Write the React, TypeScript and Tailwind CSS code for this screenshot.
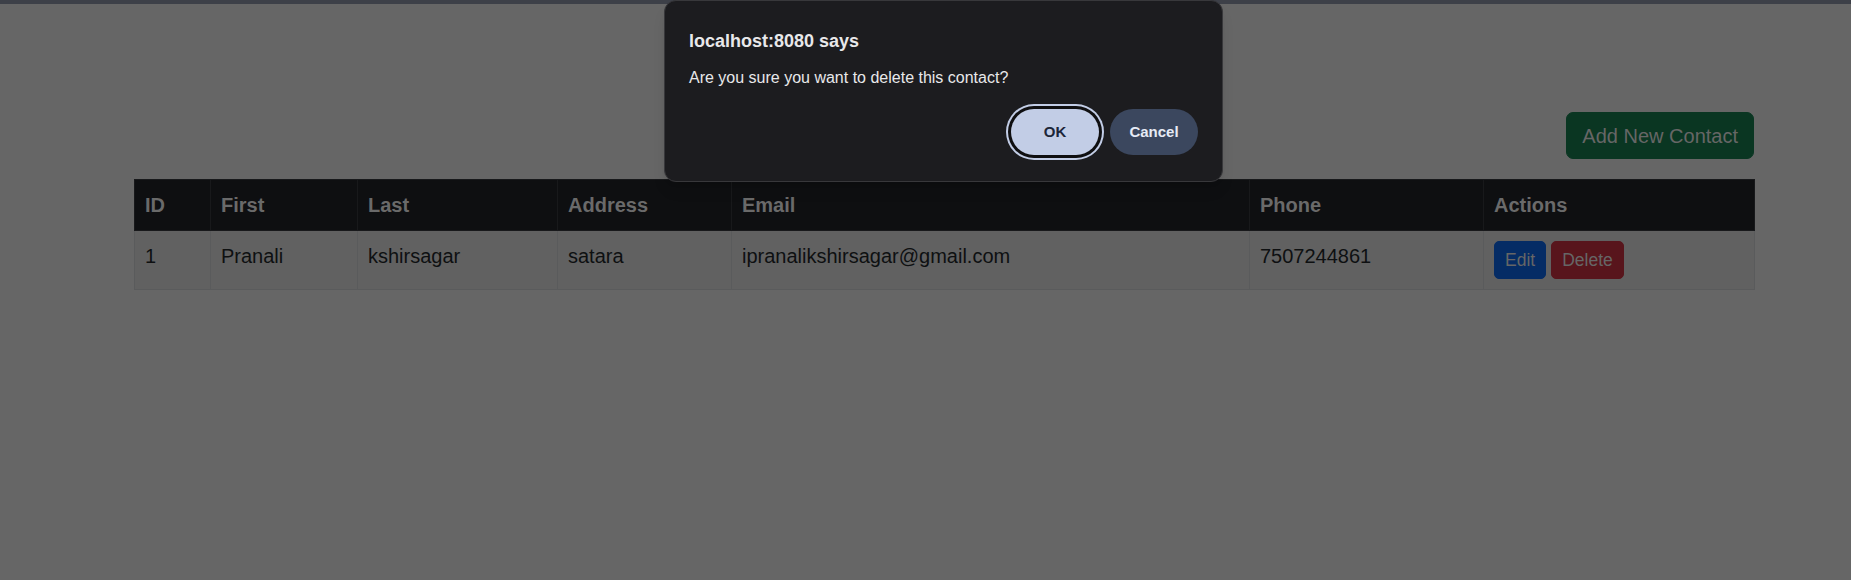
const font = { fontFamily: '"Liberation Sans", Arial, sans-serif' };

const contacts = [
  { id: 1, first: "Pranali", last: "kshirsagar", address: "satara", email: "ipranalikshirsagar@gmail.com", phone: "7507244861" },
];

const colWidths = ["w-[76px]", "w-[147px]", "w-[200px]", "w-[174px]", "w-[518px]", "w-[234px]", "w-[271px]"];
const headers = ["ID", "First", "Last", "Address", "Email", "Phone", "Actions"];

function ConfirmDialog() {
  return (
    <div
      className="absolute left-[664px] top-0 w-[559px] rounded-xl border border-[#38383b] bg-[#1c1c1f] pl-[24px] pr-[24px] pt-[28px] pb-[26px] shadow-lg"
      style={font}
    >
      <h2 className="text-[18px] leading-[24px] font-bold text-[#e8e8ea]">localhost:8080 says</h2>
      <p className="mt-[15px] text-[16px] leading-[20px] text-[#e8e8ea]">Are you sure you want to delete this contact?</p>
      <div className="mt-[21px] flex justify-end gap-[11px]">
        <button className="h-[46px] w-[88px] rounded-full bg-[#c2cde6] text-[15px] font-bold text-[#1c2639] ring-2 ring-[#c2cde6] ring-offset-3 ring-offset-[#0f0f11]">
          OK
        </button>
        <button className="h-[46px] w-[88px] rounded-full bg-[#3b475e] text-[15px] font-bold text-[#e6ebf5]">
          Cancel
        </button>
      </div>
    </div>
  );
}

export default function App() {
  return (
    <div className="relative min-h-[580px] w-full bg-[#666666]" style={font}>
      <div className="h-[4px] bg-[#3d4048]" />
      <div className="ml-[134px] w-[1620px] pt-[108px]">
        <div className="mb-[20px] flex justify-end">
          <button className="h-[47px] rounded-[7px] border border-[#0a3622] bg-[#0a3622] px-[15px] text-[20px] text-[#666666]">
            Add New Contact
          </button>
        </div>
        <table className="w-full table-fixed border-collapse text-[20px] leading-[30px]">
          <colgroup>
            {colWidths.map((w, i) => (
              <col key={i} className={w} />
            ))}
          </colgroup>
          <thead>
            <tr className="bg-[#0e0f11]">
              {headers.map((h) => (
                <th key={h} className="border border-[#18191b] px-[10px] py-[10px] text-left font-bold text-[#6a6a6a]">
                  {h}
                </th>
              ))}
            </tr>
          </thead>
          <tbody>
            {contacts.map((c) => (
              <tr key={c.id} className="bg-[#616161] align-top text-[#0e1011]">
                <td className="border border-[#5a5b5c] px-[10px] py-[10px]">{c.id}</td>
                <td className="border border-[#5a5b5c] px-[10px] py-[10px]">{c.first}</td>
                <td className="border border-[#5a5b5c] px-[10px] py-[10px]">{c.last}</td>
                <td className="border border-[#5a5b5c] px-[10px] py-[10px]">{c.address}</td>
                <td className="border border-[#5a5b5c] px-[10px] py-[10px]">{c.email}</td>
                <td className="border border-[#5a5b5c] px-[10px] py-[10px]">{c.phone}</td>
                <td className="border border-[#5a5b5c] px-[10px] py-[10px]">
                  <div className="flex gap-[5px]">
                    <button className="h-[38px] rounded-[5px] border border-[#052c65] bg-[#052c65] px-[10px] text-[17.5px] text-[#666666]">
                      Edit
                    </button>
                    <button className="h-[38px] rounded-[5px] border border-[#58151c] bg-[#58151c] px-[10px] text-[17.5px] text-[#666666]">
                      Delete
                    </button>
                  </div>
                </td>
              </tr>
            ))}
          </tbody>
        </table>
      </div>
      <ConfirmDialog />
    </div>
  );
}
